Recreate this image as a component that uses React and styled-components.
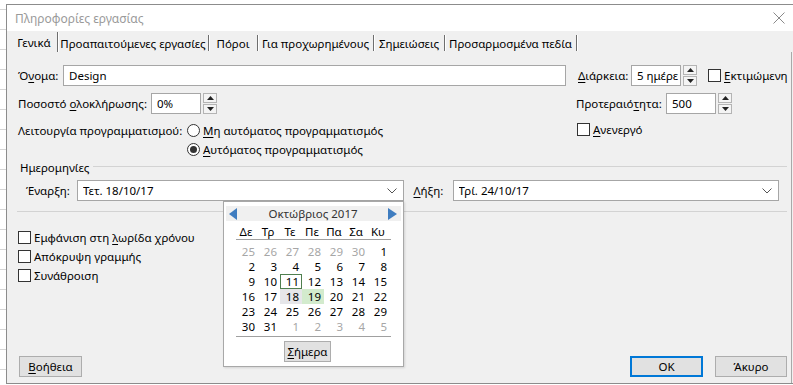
import React from 'react';
import styled, { createGlobalStyle } from 'styled-components';

const Global = createGlobalStyle`
  html, body { margin: 0; padding: 0; }
  body {
    width: 793px; height: 385px; overflow: hidden; background: #fff;
    font-family: "Noto Sans", "Open Sans", sans-serif; font-size: 11.5px; color: #000;
  }
  * { box-sizing: border-box; }
`;

const Page = styled.div`
  display: flex;
  height: 385px;
  padding: 4px 0 0 6px;
  background-color: #fff;
  background-image: linear-gradient(#d6d6d6 1px, transparent 1px);
  background-size: 100% 20px;
  background-position: 0 9px;
`;

const Window = styled.div`
  flex: 1;
  height: 380px;
  display: flex;
  flex-direction: column;
  background: #f0f0f0;
  border: 1px solid #8c8c8c;
  border-right: none;
`;

const TitleBar = styled.div`
  height: 26px;
  flex: none;
  display: flex;
  align-items: center;
  justify-content: space-between;
  padding: 0 8px 0 8px;
  background: #fff;
  color: #9a9a9a;
  font-size: 12px;
`;

const TabStrip = styled.div`
  height: 21px;
  flex: none;
  display: flex;
  align-items: flex-end;
`;

const Tab = styled.div`
  width: ${p => p.$w}px;
  height: ${p => (p.$active ? 20 : 16)}px;
  display: flex;
  align-items: center;
  justify-content: center;
  padding-left: ${p => (p.$active ? 4 : 0)}px;
  white-space: nowrap;
  border-right: 1px solid #6e6e6e;
  box-shadow: 1px 0 0 #fff;
  margin-bottom: ${p => (p.$active ? 0 : 1)}px;
`;

const Panel = styled.div`
  flex: 1;
  display: flex;
  flex-direction: column;
  margin-right: 1px;
  border-right: 1px solid #a9a9a9;
  padding: 13px 4px 6px 11px;
`;

const TopArea = styled.div`
  display: flex;
`;

const LeftCol = styled.div`
  flex: 1;
  display: flex;
  flex-direction: column;
`;

const RightCol = styled.div`
  width: 211px;
  margin-left: 10px;
  display: flex;
  flex-direction: column;
`;

const FieldRow = styled.div`
  display: flex;
  align-items: center;
  height: 21px;
  margin-top: ${p => p.$mt || 0}px;
`;

const Label = styled.div`
  width: ${p => p.$w}px;
  margin-left: ${p => p.$ml || 0}px;
  flex: none;
  white-space: nowrap;
`;

const TextBox = styled.div`
  height: 21px;
  ${p => (p.$w ? `width: ${p.$w}px; flex: none;` : 'flex: 1;')}
  display: flex;
  align-items: center;
  padding: 0 ${p => (p.$pr !== undefined ? p.$pr : 6)}px 0 5px;
  background: #fff;
  border: 1px solid #a6a6a6;
  white-space: nowrap;
  overflow: hidden;
  position: relative;
`;

const TextVal = styled.span`
  flex: 1;
  overflow: hidden;
`;

const Spinner = styled.div`
  width: 14px;
  height: 21px;
  margin-left: 2px;
  display: flex;
  flex-direction: column;
  justify-content: space-between;
  flex: none;
`;

const SpinBtn = styled.div`
  height: 10px;
  border: 1px solid #b4b4b4;
  background: #f4f4f4;
  display: flex;
  align-items: center;
  justify-content: center;
`;

const Box = styled.span`
  width: 13px;
  height: 13px;
  flex: none;
  border: 1px solid #333;
  background: #fff;
  margin-left: ${p => p.$ml || 0}px;
  margin-right: 3px;
`;

const Radio = styled.span`
  width: 13px;
  height: 13px;
  flex: none;
  border-radius: 50%;
  border: 1px solid #333;
  background: #fff;
  margin-left: 1px;
  margin-right: 3px;
  display: flex;
  align-items: center;
  justify-content: center;
  &::after {
    content: '';
    width: 7px;
    height: 7px;
    border-radius: 50%;
    background: ${p => (p.$on ? '#333' : 'transparent')};
  }
`;

const CheckRow = styled.div`
  display: flex;
  align-items: center;
  height: 19px;
  margin-top: ${p => p.$mt || 0}px;
  white-space: nowrap;
`;

const ModeRow = styled.div`
  display: flex;
  margin-top: 7px;
`;

const ModeLabel = styled.div`
  width: 168px;
  height: 19px;
  line-height: 19px;
  white-space: nowrap;
`;

const RadioGroup = styled.div`
  display: flex;
  flex-direction: column;
`;

const Mn = styled.span`
  text-decoration: underline;
  text-underline-offset: 2px;
`;

const GroupHead = styled.div`
  display: flex;
  align-items: center;
  height: 14px;
  margin-top: 1px;
  margin-left: 2px;
  white-space: nowrap;
`;

const GroupLine = styled.div`
  flex: 1;
  height: 1px;
  margin: -2px 0 0 4px;
  background: #d3d3d3;
`;

const DatesRow = styled.div`
  display: flex;
  align-items: center;
  height: 21px;
  margin-top: 6px;
  padding: 0 8px;
`;

const DateField = styled.div`
  flex: 1;
  position: relative;
  display: flex;
`;

const Separator = styled.div`
  height: 1px;
  margin: 10px 0 0 -1px;
  background: #d3d3d3;
`;

const Spacer = styled.div`
  flex: 1;
`;

const ButtonRow = styled.div`
  display: flex;
  align-items: center;
  height: 21px;
`;

const Button = styled.div`
  width: ${p => p.$w}px;
  height: 21px;
  margin-left: ${p => p.$ml || 0}px;
  display: flex;
  align-items: center;
  justify-content: center;
  background: #e1e1e1;
  border: 1px solid ${p => (p.$default ? '#0078d7' : '#adadad')};
  box-shadow: ${p => (p.$default ? 'inset 0 0 0 1px #0078d7' : 'none')};
`;

/* Calendar popup */
const Popup = styled.div`
  position: absolute;
  top: 100%;
  left: 146px;
  width: 181px;
  height: 166px;
  background: #fff;
  border: 1px solid #a8a8a8;
  box-shadow: 1px 1px 2px rgba(0,0,0,0.12);
  display: flex;
  flex-direction: column;
  padding: 3px 2px 4px 2px;
  z-index: 2;
`;

const CalHeader = styled.div`
  height: 15px;
  margin-top: 1px;
  display: flex;
  align-items: center;
  justify-content: space-between;
  padding: 0 4px 0 3px;
  background: #f0f0f0;
  color: #333;
`;

const WeekHead = styled.div`
  display: grid;
  grid-template-columns: repeat(7, 22px);
  height: 17px;
  margin: 3px 0 0 10px;
  width: 155px;
  border-bottom: 1px solid #a0a0a0;
  align-items: center;
`;

const WeekName = styled.div`
  text-align: center;
  padding-right: 2px;
`;

const DaysGrid = styled.div`
  display: grid;
  grid-template-columns: repeat(7, 22px);
  grid-auto-rows: 15px;
  margin: 4px 0 0 10px;
`;

const Day = styled.div`
  text-align: right;
  padding-right: 3px;
  line-height: 15px;
  height: 15px;
  overflow: hidden;
  color: ${p => (p.$other ? '#a6a6a6' : '#000')};
  background: ${p => (p.$sel ? '#e6e6e9' : p.$today ? '#d3ebcd' : 'transparent')};
  box-shadow: ${p => (p.$boxed ? 'inset 0 0 0 1px #4f7f4f' : 'none')};
`;

const CalFoot = styled.div`
  margin: 2px 0 0 10px;
  width: 155px;
  border-top: 1px solid #a0a0a0;
  display: flex;
  justify-content: center;
  padding: 4px 12px 0 0;
`;

const TodayBtn = styled.div`
  width: 47px;
  height: 21px;
  display: flex;
  align-items: center;
  justify-content: center;
  background: #e1e1e1;
  border: 1px solid #adadad;
`;

const Arrow = ({ dir }) => (
  <svg width="9" height="12" viewBox="0 0 9 12">
    {dir === 'l'
      ? <polygon points="8,0 8,12 0,6" fill="#3f7dc0" />
      : <polygon points="0,0 0,12 9,6" fill="#3f7dc0" />}
  </svg>
);

const Tri = ({ up }) => (
  <svg width="7" height="4" viewBox="0 0 7 4">
    {up ? <polygon points="0,4 7,4 3.5,0" fill="#222" /> : <polygon points="0,0 7,0 3.5,4" fill="#222" />}
  </svg>
);

const Chevron = () => (
  <svg width="10" height="6" viewBox="0 0 10 6" style={{ flex: 'none' }}>
    <polyline points="0.5,0.5 5,5 9.5,0.5" fill="none" stroke="#555" strokeWidth="1" />
  </svg>
);

const CloseX = () => (
  <svg width="12" height="12" viewBox="0 0 12 12">
    <line x1="0.5" y1="0.5" x2="11.5" y2="11.5" stroke="#8a8a8a" strokeWidth="1" />
    <line x1="11.5" y1="0.5" x2="0.5" y2="11.5" stroke="#8a8a8a" strokeWidth="1" />
  </svg>
);

const Spin = () => (
  <Spinner>
    <SpinBtn><Tri up /></SpinBtn>
    <SpinBtn><Tri /></SpinBtn>
  </Spinner>
);

const tabs = [
  { t: 'Γενικά', w: 51, active: true },
  { t: 'Προαπαιτούμενες εργασίες', w: 151 },
  { t: 'Πόροι', w: 49 },
  { t: 'Για προχωρημένους', w: 116 },
  { t: 'Σημειώσεις', w: 71 },
  { t: 'Προσαρμοσμένα πεδία', w: 132 },
];

const weekNames = ['Δε', 'Τρ', 'Τε', 'Πε', 'Πα', 'Σα', 'Κυ'];

const days = [
  ...[25, 26, 27, 28, 29, 30].map(d => ({ d, other: true })),
  ...Array.from({ length: 31 }, (_, i) => ({ d: i + 1 })),
  ...[1, 2, 3, 4, 5].map(d => ({ d, other: true })),
];

export default function App() {
  return (
    <>
      <Global />
      <Page>
        <Window>
          <TitleBar>
            <span>Πληροφορίες εργασίας</span>
            <CloseX />
          </TitleBar>
          <TabStrip>
            {tabs.map(tb => (
              <Tab key={tb.t} $w={tb.w} $active={tb.active}>{tb.t}</Tab>
            ))}
          </TabStrip>
          <Panel>
            <TopArea>
              <LeftCol>
                <FieldRow>
                  <Label $w={45}>Ό<Mn>ν</Mn>ομα:</Label>
                  <TextBox><TextVal>Design</TextVal></TextBox>
                </FieldRow>
                <FieldRow $mt={7}>
                  <Label $w={133}>Ποσοστό <Mn>ο</Mn>λοκλήρωσης:</Label>
                  <TextBox $w={50}><TextVal>0%</TextVal></TextBox>
                  <Spin />
                </FieldRow>
                <ModeRow>
                  <ModeLabel>Λειτουργία προγραμματισμού:</ModeLabel>
                  <RadioGroup>
                    <CheckRow><Radio /><span><Mn>Μ</Mn>η αυτόματος προγραμματισμός</span></CheckRow>
                    <CheckRow><Radio $on /><span><Mn>Α</Mn>υτόματος προγραμματισμός</span></CheckRow>
                  </RadioGroup>
                </ModeRow>
              </LeftCol>
              <RightCol>
                <FieldRow>
                  <Label $w={53} $ml={2}><Mn>Δ</Mn>ιάρκεια:</Label>
                  <TextBox $w={50} $pr={0}><TextVal>5 ημέρε</TextVal></TextBox>
                  <Spin />
                  <Box $ml={11} />
                  <span><Mn>Ε</Mn>κτιμώμενη</span>
                </FieldRow>
                <FieldRow $mt={7}>
                  <Label $w={90}>Προτεραιό<Mn>τ</Mn>ητα:</Label>
                  <TextBox $w={50}><TextVal>500</TextVal></TextBox>
                  <Spin />
                </FieldRow>
                <CheckRow $mt={6}>
                  <Box $ml={1} />
                  <span><Mn>Α</Mn>νενεργό</span>
                </CheckRow>
              </RightCol>
            </TopArea>

            <GroupHead>
              <span>Ημερομηνίες</span>
              <GroupLine />
            </GroupHead>
            <DatesRow>
              <Label $w={51}>Έναρξη:</Label>
              <DateField>
                <TextBox><TextVal>Τετ. 18/10/17</TextVal><Chevron /></TextBox>
                <Popup>
                  <CalHeader>
                    <Arrow dir="l" />
                    <span>Οκτώβριος 2017</span>
                    <Arrow dir="r" />
                  </CalHeader>
                  <WeekHead>
                    {weekNames.map(n => <WeekName key={n}>{n}</WeekName>)}
                  </WeekHead>
                  <DaysGrid>
                    {days.map((x, i) => (
                      <Day
                        key={i}
                        $other={x.other}
                        $boxed={!x.other && x.d === 11}
                        $sel={!x.other && x.d === 18}
                        $today={!x.other && x.d === 19}
                      >
                        {x.d}
                      </Day>
                    ))}
                  </DaysGrid>
                  <CalFoot>
                    <TodayBtn><span><Mn>Σ</Mn>ήμερα</span></TodayBtn>
                  </CalFoot>
                </Popup>
              </DateField>
              <Label $w={39} $ml={10}><Mn>Λ</Mn>ήξη:</Label>
              <DateField>
                <TextBox><TextVal>Τρί. 24/10/17</TextVal><Chevron /></TextBox>
              </DateField>
            </DatesRow>
            <Separator />

            <CheckRow $mt={16}><Box /><span>Εμφάνιση στη <Mn>λ</Mn>ωρίδα χρόνου</span></CheckRow>
            <CheckRow><Box /><span>Απόκρυψη γραμμής</span></CheckRow>
            <CheckRow><Box /><span>Συνάθροιση</span></CheckRow>

            <Spacer />
            <ButtonRow>
              <Button $w={63} $ml={1}><span><Mn>Β</Mn>οήθεια</span></Button>
              <Spacer />
              <Button $w={73} $default>OK</Button>
              <Button $w={72} $ml={12}>Άκυρο</Button>
            </ButtonRow>
          </Panel>
        </Window>
      </Page>
    </>
  );
}
